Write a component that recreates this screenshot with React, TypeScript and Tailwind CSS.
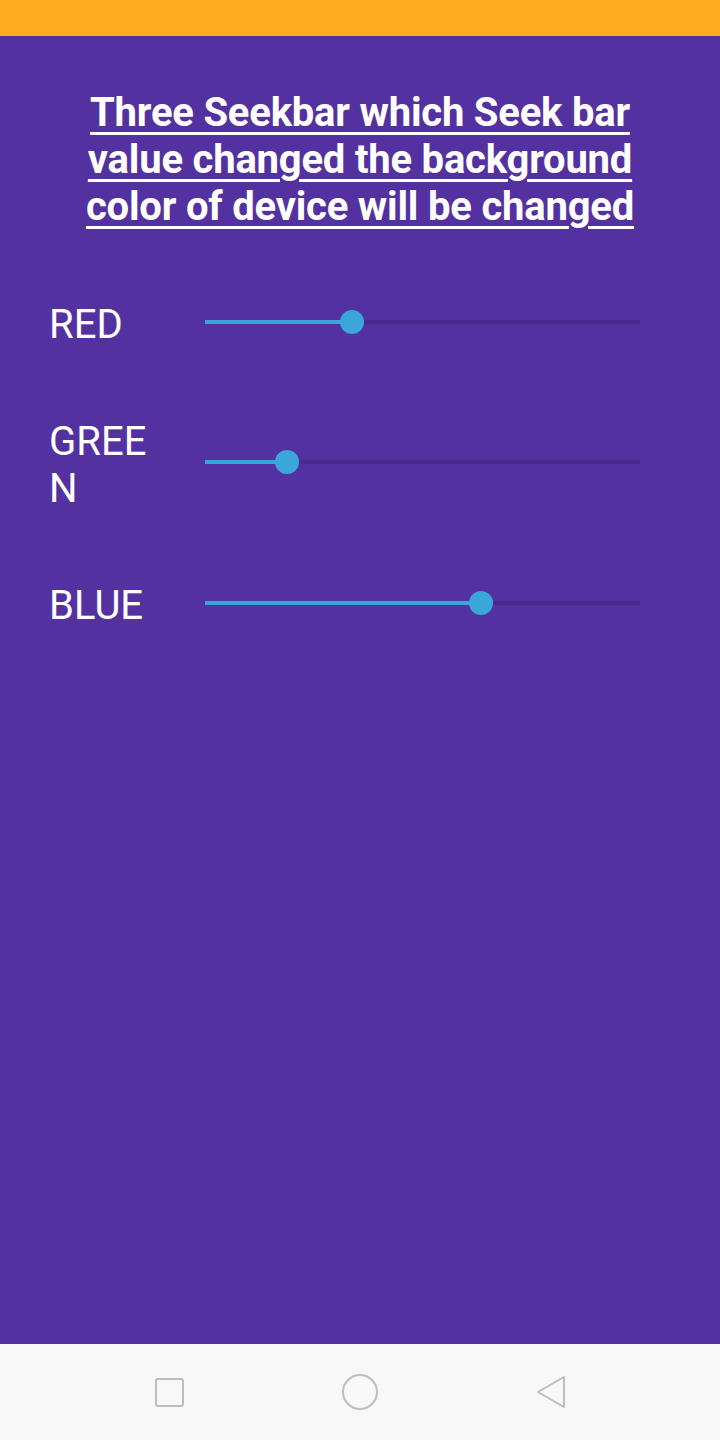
import React from "react";

function Seekbar({ pos }: { pos: number }) {
  // pos: thumb center offset in px from track start (track width 435)
  return (
    <div className="relative ml-[46px] mb-[6px] h-[24px] w-[435px] flex items-center">
      <div className="h-[4px] w-full bg-[#472a8e]" />
      <div className="absolute left-0 top-[10px] h-[4px] bg-[#3ba6d9]" style={{ width: pos }} />
      <div
        className="absolute top-0 h-[24px] w-[24px] rounded-full bg-[#3ba6d9]"
        style={{ left: pos - 12 }}
      />
    </div>
  );
}

function Row({ label, pos }: { label: string; pos: number }) {
  return (
    <div className="flex items-center pl-[49px]">
      <div className="w-[110px] break-all text-[40px] leading-[47px] text-white">{label}</div>
      <Seekbar pos={pos} />
    </div>
  );
}

export default function App() {
  return (
    <div
      className="flex h-[1440px] w-[720px] flex-col bg-[#5431a1]"
      style={{ fontFamily: "Roboto, 'Noto Sans', sans-serif" }}
    >
      <div className="h-[36px] w-full bg-[#ffac1f]" />
      <div className="flex-1">
        <div className="mx-auto mt-[53px] w-[560px] text-center text-[40px] font-bold leading-[47px] tracking-[-0.2px] text-white underline decoration-[3px] underline-offset-[6px]">
          Three Seekbar which Seek bar value changed the background color of device will be changed
        </div>
        <div className="mt-[71px] flex flex-col gap-[70px]">
          <Row label="RED" pos={147} />
          <Row label="GREEN" pos={82} />
          <Row label="BLUE" pos={276} />
        </div>
      </div>
      <div className="flex h-[96px] w-full items-center justify-center gap-[155px] bg-[#f8f8f8]">
        <div className="flex h-[36px] w-[36px] items-center justify-center">
          <div className="h-[29px] w-[29px] rounded-[3px] border-2 border-[#bdbdbd]" />
        </div>
        <div className="flex h-[36px] w-[36px] items-center justify-center">
          <div className="h-[36px] w-[36px] rounded-full border-2 border-[#bdbdbd]" />
        </div>
        <div className="flex h-[36px] w-[36px] items-center justify-center">
          <svg width="36" height="36" viewBox="0 0 36 36">
            <path
              d="M5 18 L31 3 L31 33 Z"
              fill="none"
              stroke="#bdbdbd"
              strokeWidth="2"
              strokeLinejoin="round"
            />
          </svg>
        </div>
      </div>
    </div>
  );
}
